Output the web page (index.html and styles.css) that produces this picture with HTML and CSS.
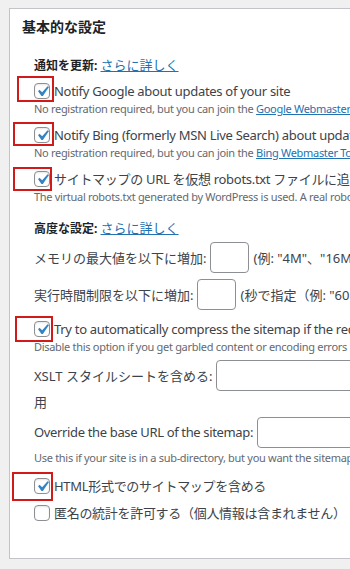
FILE: index.html
```html
<!DOCTYPE html>
<html lang="ja">
<head>
    <meta charset="UTF-8">
    <meta name="viewport" content="width=device-width, initial-scale=1.0">
    <title>基本的な設定</title>
    <link rel="stylesheet" href="styles.css">
</head>
<body>
    <div class="postbox">
        <h2 class="hndle">基本的な設定</h2>
        <div class="inside">
            <p class="group-title"><b>通知を更新:</b> <a href="#">さらに詳しく</a></p>
            <ul class="options">
                <li class="option">
                    <label class="row"><span class="cb checked"><svg viewBox="0 0 20 20"><path d="M14.83 4.89l1.34.94-5.81 8.38H9.02L5.78 9.67l1.34-1.25 2.57 2.4z"/></svg></span>Notify Google about updates of your site</label>
                    <span class="mark"></span>
                    <small class="desc">No registration required, but you can join the <a href="#">Google Webmaster Tools</a> to check crawling statistics.</small>
                </li>
                <li class="option">
                    <label class="row"><span class="cb checked"><svg viewBox="0 0 20 20"><path d="M14.83 4.89l1.34.94-5.81 8.38H9.02L5.78 9.67l1.34-1.25 2.57 2.4z"/></svg></span>Notify Bing (formerly MSN Live Search) about updates of your site</label>
                    <span class="mark mark-b"></span>
                    <small class="desc">No registration required, but you can join the <a href="#">Bing Webmaster Tools</a> to check crawling statistics.</small>
                </li>
                <li class="option">
                    <label class="row"><span class="cb checked"><svg viewBox="0 0 20 20"><path d="M14.83 4.89l1.34.94-5.81 8.38H9.02L5.78 9.67l1.34-1.25 2.57 2.4z"/></svg></span>サイトマップの URL を仮想 robots.txt ファイルに追加</label>
                    <span class="mark mark-c"></span>
                    <small class="desc">The virtual robots.txt generated by WordPress is used. A real robots.txt file must NOT exist in the site directory!</small>
                </li>
            </ul>

            <p class="group-title adv"><b>高度な設定:</b> <a href="#">さらに詳しく</a></p>
            <div class="field">
                <label>メモリの最大値を以下に増加:</label><input type="text" class="small-input"><span>(例: "4M"、"16M"、"32M"など)</span>
            </div>
            <div class="field">
                <label>実行時間制限を以下に増加:</label><input type="text" class="small-input"><span>(秒で指定（例: "60" または "0" で無制限）)</span>
            </div>
            <div class="option opt-gzip">
                <label class="row"><span class="cb checked"><svg viewBox="0 0 20 20"><path d="M14.83 4.89l1.34.94-5.81 8.38H9.02L5.78 9.67l1.34-1.25 2.57 2.4z"/></svg></span>Try to automatically compress the sitemap if the requesting client supports it.</label>
                <span class="mark mark-d"></span>
                <small class="desc">Disable this option if you get garbled content or encoding errors in your sitemap.</small>
            </div>
            <div class="field field-xslt">
                <label>XSLT スタイルシートを含める:</label><input type="text" class="wide-input">
            </div>
            <div class="wrap-line">用</div>
            <div class="field field-base">
                <label>Override the base URL of the sitemap:</label><input type="text" class="wide-input">
            </div>
            <small class="desc">Use this if your site is in a sub-directory, but you want the sitemap be located in the root.</small>
            <div class="option opt-html">
                <label class="row"><span class="cb checked"><svg viewBox="0 0 20 20"><path d="M14.83 4.89l1.34.94-5.81 8.38H9.02L5.78 9.67l1.34-1.25 2.57 2.4z"/></svg></span>HTML形式でのサイトマップを含める</label>
                <span class="mark mark-e"></span>
            </div>
            <div class="option opt-stats">
                <label class="row"><span class="cb"></span>匿名の統計を許可する（個人情報は含まれません）</label>
            </div>
        </div>
    </div>
</body>
</html>
```

FILE: styles.css
```css
html, body {
    overflow: hidden;
}

body {
    margin: 0;
    padding: 8px 0 0 9px;
    background: #f0f0f1;
    font-family: "Noto Sans", "Noto Sans CJK JP", sans-serif;
    font-size: 13px;
    color: #3c434a;
    height: 569px;
    box-sizing: border-box;
}

a {
    color: #2271b1;
}

.postbox {
    width: 600px;
    background: #fff;
    border: 1px solid #c3c4c7;
}

.hndle {
    margin: 0;
    padding: 8px 12px 0;
    font-size: 14px;
    font-weight: 600;
    line-height: 20px;
    color: #1d2327;
}

.inside {
    padding: 18px 0 35px 24px;
    white-space: nowrap;
}

.group-title {
    margin: 0 0 5px;
    line-height: 20px;
    font-size: 12px;
}

.group-title b {
    color: #1d2327;
}

.group-title a {
    font-size: 13px;
}

.group-title.adv {
    margin-top: 13px;
    margin-bottom: 2px;
}

.options {
    list-style: none;
    margin: 0;
    padding: 0;
}

.option {
    position: relative;
    margin-bottom: 8px;
}

.row {
    display: flex;
    align-items: center;
    height: 20px;
    line-height: 20px;
    letter-spacing: -0.3px;
}

.cb {
    width: 14px;
    height: 14px;
    border: 1px solid #8c8f94;
    border-radius: 4px;
    margin-right: 4px;
    flex-shrink: 0;
    box-shadow: inset 0 1px 2px rgba(0, 0, 0, 0.1);
    position: relative;
}

.cb svg {
    position: absolute;
    left: -3px;
    top: -3px;
    width: 21px;
    height: 21px;
    fill: #3582c4;
}

.desc {
    display: block;
    font-size: 11px;
    line-height: 16px;
    color: #646970;
    letter-spacing: -0.3px;
}

.mark {
    position: absolute;
    left: -17px;
    top: -5px;
    width: 33px;
    height: 22px;
    border: 2px solid #d11a1a;
}

.mark-b {
    left: -21px;
    top: -3px;
    width: 37px;
    height: 20px;
}

.mark-c {
    left: -21px;
    top: -2px;
    width: 35px;
    height: 20px;
}

.mark-d {
    left: -19px;
    top: -3px;
    width: 34px;
    height: 22px;
}

.mark-e {
    left: -22px;
    top: -4px;
    width: 37px;
    height: 25px;
}

.field {
    display: flex;
    align-items: center;
    height: 32px;
    margin-bottom: 5px;
}

.field input {
    box-sizing: border-box;
    height: 31px;
    border: 1px solid #8c8f94;
    border-radius: 4px;
    margin: 0 4px 0 4px;
    padding: 0 8px;
    font: inherit;
}

.small-input {
    width: 39px;
}

.wide-input {
    width: 300px;
}

.opt-gzip {
    margin-top: 9px;
    margin-bottom: 4px;
}

.field-xslt {
    margin-bottom: 1px;
}

.wrap-line {
    line-height: 20px;
    margin-bottom: 4px;
}

.field-base {
    margin-bottom: 2px;
}

.field-base label {
    letter-spacing: -0.35px;
}

.opt-html {
    margin-top: 10px;
    margin-bottom: 7px;
}

.opt-stats {
    margin-bottom: 0;
}
```
